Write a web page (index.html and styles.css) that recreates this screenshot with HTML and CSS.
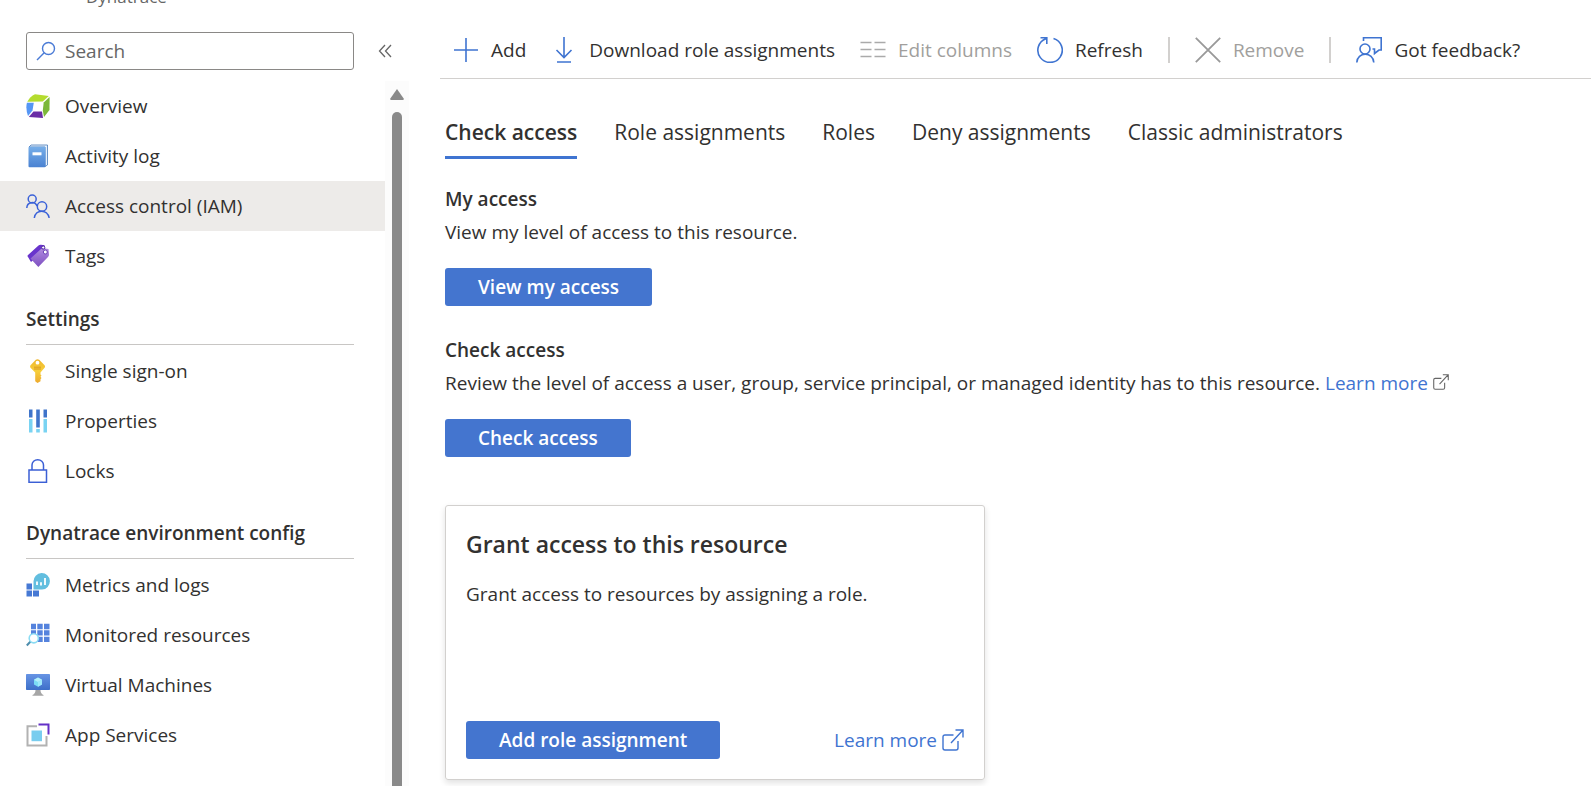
FILE: index.html
```html
<!DOCTYPE html>
<html lang="en">
<head>
<meta charset="utf-8">
<title>Access control (IAM)</title>
<link rel="stylesheet" href="styles.css">
</head>
<body>
<div class="page">
  <aside class="sidebar">
    <div class="crumb"><span>Dynatrace</span></div>
    <div class="search-row">
      <label class="search">
        <svg class="search-icon" viewBox="0 0 20 20" fill="none" stroke="#4a7bd6" stroke-width="1.4"><circle cx="12.500" cy="7.500" r="6"/><path d="M8.200 11.800 1 19"/></svg>
        <input type="search" placeholder="Search" aria-label="Search">
      </label>
      <button class="collapse" aria-label="Collapse menu"><svg width="14" height="14" viewBox="0 0 14 14" fill="none" stroke="#666" stroke-width="1.300"><path d="M7 1 1.500 7 7 13M13 1 7.500 7 13 13"/></svg></button>
    </div>
    <div class="menu-area">
      <nav class="menu">
        <a class="item" href="#">
          <svg class="icon" viewBox="0 0 24 24"><path d="M9 .3 22.800 2 16.800 7.500 1.300 7.800Q4 2.500 9 .3Z" fill="#b4dc2e"/><path d="M23.600 3 17.700 8.500 16.800 16.500 18 23 23.500 16Z" fill="#7cb83a"/><path d="M.9 8.700H7.800L6.500 16.500 2 22Q-.5 15 .9 8.700Z" fill="#5596f5"/><path d="M7.500 17.500H16L17 24 2.800 23Z" fill="#6a2ea6"/></svg>
          Overview</a>
        <a class="item" href="#">
          <svg class="icon" viewBox="0 0 24 24"><defs><linearGradient id="book" x2="0" y2="1"><stop stop-color="#76aee9"/><stop offset="1" stop-color="#4a82d2"/></linearGradient></defs><path d="M5 1H21.500V21L19 22.500V3H3Z" fill="#e8f2fc" stroke="#4679b8" stroke-width=".8"/><rect x="2.500" y="2.800" width="17" height="20.400" rx="1" fill="url(#book)"/><rect x="6.500" y="8.300" width="9" height="3" fill="#fff"/></svg>
          Activity log</a>
        <a class="item selected" href="#" aria-current="page">
          <svg class="icon" viewBox="0 0 24 24" fill="none" stroke="#3b62d8" stroke-width="1.500"><circle cx="6.200" cy="5" r="4"/><path d="M.8 14C1 7.500 9 7 11 12"/><circle cx="16" cy="12.500" r="4.700"/><path d="M8.300 24C9.500 15 21.500 15 23.200 24"/></svg>
          Access control (IAM)</a>
        <a class="item" href="#">
          <svg class="icon" viewBox="0 0 24 24"><defs><linearGradient id="tag" x2="0" y2="1"><stop stop-color="#b08be0"/><stop offset="1" stop-color="#7d4fc0"/></linearGradient></defs><path d="M2 11 12.500 1.500Q13.500.5 15 .7L18.500 1.200 19.500 6 5 18 2 13Q1 12 2 11Z" fill="#6934cc"/><path d="M4.500 14.500 15 5Q16 4 17.500 4.200L22.500 5 23 10.500Q23 12 22 13L12.300 23Z" fill="url(#tag)"/><circle cx="17.200" cy="3.500" r="1.600" fill="#fff" stroke="#4d249c"/><circle cx="19.300" cy="8" r="2" fill="#fff" stroke="#6b43b5"/></svg>
          Tags</a>
        <h2 class="group">Settings</h2>
        <a class="item" href="#">
          <svg class="icon" viewBox="0 0 24 24"><defs><linearGradient id="key" x2="0" y2="1"><stop stop-color="#efb62d"/><stop offset=".5" stop-color="#f7cf3b"/><stop offset="1" stop-color="#eda92d"/></linearGradient></defs><path fill-rule="evenodd" d="M9.800.7Q11.500-.3 13.200.7L18.600 6.200Q19.500 7.500 18.600 8.800L14.500 13.500V15.500L15.500 16.500 14.500 17.700 15.500 19 14.500 20.300V22.200L11.500 24 9.200 22.200V13.500L4.500 8.800Q3.700 7.500 4.500 6.200ZM11.500 1.800A1.900 1.900 0 1 0 11.500 5.600 1.900 1.900 0 0 0 11.500 1.800Z" fill="url(#key)"/><path d="M8 8.200H15M8 10H15" stroke="#d99a20" stroke-width="1"/></svg>
          Single sign-on</a>
        <a class="item" href="#">
          <svg class="icon" viewBox="0 0 24 24"><path d="M3 .5H6.500V8.500H3ZM10.200.5H13.800V18.500H10.200ZM17.500.5H21V8.500H17.500Z" fill="#3f74ca"/><path d="M3 10H6.500V23.500H3ZM10.200 20H13.800V23.500H10.200ZM17.500 10H21V23.500H17.500Z" fill="#79d3f2"/></svg>
          Properties</a>
        <a class="item" href="#">
          <svg class="icon" viewBox="0 0 24 24" fill="none" stroke="#3b5fd5" stroke-width="1.500"><rect x="3" y="11" width="17.500" height="12.300"/><path d="M6 11V6C6 3 8.500.8 11.700.8S17.500 3 17.500 6V11"/></svg>
          Locks</a>
        <h2 class="group">Dynatrace environment config</h2>
        <a class="item" href="#">
          <svg class="icon" viewBox="0 0 24 24"><path d="M.5 10.500H6V16.500H.5ZM.5 17.500H6V23.500H.5ZM7 17.500H13V23.500H7Z" fill="#4679d4"/><path d="M7.500 16.500V8.500A8.200 8.200 0 1 1 16 16.500Z" fill="#62bedf"/><path d="M11 8.500V12M15 9.300V12.500M19 5V12" stroke="#fff" stroke-width="1.800"/></svg>
          Metrics and logs</a>
        <a class="item" href="#">
          <svg class="icon" viewBox="0 0 24 24"><path d="M5 .8H10V6.200H5ZM11.300.8H16.700V6.200H11.300ZM18 .8H23.500V6.200H18ZM5 7.300H10V12.500H5ZM11.300 7.300H16.700V12.500H11.300ZM18 7.300H23.500V12.500H18ZM11.300 13.700H16.700V19H11.300ZM18 13.700H23.500V19H18Z" fill="#5583dd"/><path d="M4.500 18.500.8 22.500" stroke="#4d8dac" stroke-width="2"/><circle cx="7.800" cy="15.300" r="4.600" fill="#fff" stroke="#8bdcf3" stroke-width="1.600"/></svg>
          Monitored resources</a>
        <a class="item" href="#">
          <svg class="icon" viewBox="0 0 24 24"><defs><linearGradient id="vm" x2="0" y2="1"><stop stop-color="#6794e4"/><stop offset="1" stop-color="#3d6fc9"/></linearGradient></defs><rect y="1" width="24" height="16" rx=".7" fill="url(#vm)"/><path d="M9.500 17H14.500Q14.500 20.500 17.500 22V22.800H6.500V22Q9.500 20.500 9.500 17Z" fill="#a6a6a6"/><path d="M12 4.500 16 6.800V11.400L12 13.700 8 11.400V6.800Z" fill="#7bdcf5"/><path d="M12 4.500 16 6.800 12 9.100 8 6.800Z" fill="#b5effb"/><path d="M12 9.100 16 6.800V11.400L12 13.700Z" fill="#9de8fa"/></svg>
          Virtual Machines</a>
        <a class="item" href="#">
          <svg class="icon" viewBox="0 0 24 24"><path d="M11 3.200H1.500V22.500H20.500V13" fill="none" stroke="#b2b2b2" stroke-width="2"/><rect x="5.500" y="7.500" width="10.500" height="10.700" fill="#78cdef"/><path d="M12.500 1.400H22.500V11.500" fill="none" stroke="#6431c7" stroke-width="2"/></svg>
          App Services</a>
      </nav>
      <div class="scrollbar" aria-hidden="true"><span class="arrow"></span><span class="thumb"></span></div>
    </div>
  </aside>

  <main class="main">
    <div class="toolbar">
      <button class="tool"><svg class="tool-icon" viewBox="0 0 26 26" fill="none" stroke="#3f74d1" stroke-width="1.600"><path d="M13 1V25M1 13H25"/></svg>Add</button>
      <button class="tool"><svg class="tool-icon" viewBox="0 0 26 26" fill="none" stroke="#3f74d1" stroke-width="1.600"><path d="M13 0V20M5.500 13 13 20.500 20.500 13M6 25H20"/></svg>Download role assignments</button>
      <button class="tool" disabled><svg class="tool-icon" viewBox="0 0 26 26" fill="none" stroke="#aaa" stroke-width="1.600"><path d="M.5 5.500H11.500M.5 12.500H11.500M.5 19.500H11.500M14.500 5.500H25.500M14.500 12.500H25.500M14.500 19.500H25.500"/></svg>Edit columns</button>
      <button class="tool"><svg class="tool-icon" viewBox="0 0 26 26" fill="none" stroke="#3f74d1" stroke-width="1.600"><path d="M16.500 1.500A12.200 12.200 0 1 1 9 1.700M3.500.8H9.800V7"/></svg>Refresh</button>
      <span class="divider"></span>
      <button class="tool" disabled><svg class="tool-icon" viewBox="0 0 26 26" fill="none" stroke="#999" stroke-width="1.800"><path d="M.8.800 25.200 25.200M25.200.8.8 25.200"/></svg>Remove</button>
      <span class="divider"></span>
      <button class="tool"><svg class="tool-icon" viewBox="0 0 26 26" fill="none" stroke="#3f74d1" stroke-width="1.600"><circle cx="9" cy="12" r="5"/><path d="M.8 25.500C1 14.500 17.500 14.500 17.800 25.500M7.500 4V.8H25.200V13H23L18.500 16.500V12H16.500"/></svg>Got feedback?</button>
    </div>

    <div class="content">
      <div class="tabs" role="tablist">
        <button class="tab active" role="tab" aria-selected="true">Check access</button>
        <button class="tab" role="tab">Role assignments</button>
        <button class="tab" role="tab">Roles</button>
        <button class="tab" role="tab">Deny assignments</button>
        <button class="tab" role="tab">Classic administrators</button>
      </div>

      <section class="section">
        <h3>My access</h3>
        <p>View my level of access to this resource.</p>
        <button class="primary">View my access</button>
      </section>

      <section class="section">
        <h3>Check access</h3>
        <p>Review the level of access a user, group, service principal, or managed identity has to this resource. <a class="link" href="#">Learn more <svg class="ext-small" viewBox="0 0 22 22" fill="none" stroke="#666" stroke-width="1.500"><path d="M11.500 6H3Q1 6 1 8V19Q1 21 3 21H14Q16 21 16 19V12M9 14 21 1M13.500 1H21V8.500"/></svg></a></p>
        <button class="primary">Check access</button>
      </section>

      <section class="card">
        <h3>Grant access to this resource</h3>
        <p>Grant access to resources by assigning a role.</p>
        <div class="card-foot">
          <button class="primary">Add role assignment</button>
          <a class="link card-link" href="#">Learn more <svg class="ext" viewBox="0 0 22 22" fill="none" stroke="#3f74d1" stroke-width="1.400"><path d="M11.500 6H3Q1 6 1 8V19Q1 21 3 21H14Q16 21 16 19V12M9 14 21 1M13.500 1H21V8.500"/></svg></a>
        </div>
      </section>
    </div>
  </main>
</div>
</body>
</html>
```
FILE: styles.css
```css
* { box-sizing: border-box; }
body {
  margin: 0;
  overflow: hidden;
  background: #fff;
  color: #323130;
  font: 19px/26px "Open Sans", "Noto Sans", sans-serif;
}
button, input { font: inherit; color: inherit; }
button { border: 0; background: none; padding: 0; }
a { color: inherit; text-decoration: none; }
h2, h3, p { margin: 0; }
svg { flex: none; }

.page { display: flex; height: 100vh; }

/* Sidebar */
.sidebar { display: flex; flex-direction: column; flex: 0 0 409px; }
.crumb {
  display: flex;
  align-items: flex-end;
  height: 8px;
  padding-left: 86px;
  overflow: hidden;
  color: #666;
  font-size: 17px;
  line-height: 22px;
}
.search-row { display: flex; align-items: center; gap: 24px; padding: 24px 0 11px 26px; }
.search {
  display: flex;
  align-items: center;
  gap: 9px;
  width: 328px;
  height: 38px;
  padding: 0 9px;
  border: 1px solid #8a8886;
  border-radius: 3px;
}
.search-icon { width: 20px; height: 20px; }
.search input { flex: 1; min-width: 0; padding: 0; border: 0; outline: 0; background: none; }
.search input::placeholder { color: #666; opacity: 1; }
.collapse { display: flex; }

.menu-area { display: flex; flex: 1; min-height: 0; }
.menu { flex: 1; overflow: hidden; }
.item { display: flex; align-items: center; gap: 15px; height: 50px; padding-left: 26px; }
.selected { background: #edebe9; }
.icon { width: 24px; height: 24px; }
.group {
  margin: 0 31px 1px 26px;
  padding: 25px 0 12px;
  border-bottom: 1px solid #c8c6c4;
  font-size: 19px;
  font-weight: 600;
}
.group ~ .group { padding-top: 24px; }
.scrollbar {
  display: flex;
  flex-direction: column;
  align-items: center;
  gap: 12px;
  width: 24px;
  padding-top: 8px;
  background: #fcfcfc;
}
.arrow { width: 14px; height: 11px; background: #8a8a8a; clip-path: polygon(50% 0, 100% 90%, 94% 100%, 6% 100%, 0 90%); }
.thumb { flex: 1; width: 10px; border-radius: 5px 5px 0 0; background: #8a8a8a; }

/* Main */
.main { flex: 1; min-width: 0; padding-left: 31px; }
.toolbar {
  display: flex;
  align-items: center;
  gap: 25px;
  height: 79px;
  padding: 21px 0 0 13px;
  border-bottom: 1px solid #d2d0ce;
  white-space: nowrap;
}
.tool { display: flex; align-items: center; gap: 12px; }
.tool:disabled { color: #a19f9d; }
.tool-icon { width: 26px; height: 26px; }
.divider { width: 2px; height: 26px; background: #d2d0ce; }

.content { padding: 40px 5px 0; }
.tabs { display: flex; gap: 37px; white-space: nowrap; font-size: 21px; }
.tab { padding-bottom: 11px; border-bottom: 3px solid transparent; }
.tab.active { border-color: #3f74d1; font-weight: 600; }

.section { padding-top: 27px; }
.section + .section { padding-top: 31px; }
.section h3 { font-size: 19px; font-weight: 600; }
.section p { padding: 7px 0 23px; }
.primary {
  height: 38px;
  padding: 0 33px;
  border-radius: 3px;
  background: #4475cf;
  color: #fff;
  font-weight: 600;
}
.link { color: #3f74d1; }
.ext-small { width: 16px; height: 16px; }

.card {
  display: flex;
  flex-direction: column;
  width: 540px;
  height: 275px;
  margin-top: 48px;
  padding: 23px 20px 20px;
  border: 1px solid #d2d0ce;
  border-radius: 3px;
  box-shadow: 0 3px 6px rgba(0, 0, 0, .12);
}
.card h3 { font-size: 23px; line-height: 30px; font-weight: 600; }
.card p { padding-top: 22px; }
.card-foot { display: flex; justify-content: space-between; align-items: center; margin-top: auto; }
.card-link { display: flex; align-items: center; gap: 5px; }
.ext { width: 22px; height: 22px; }
```
